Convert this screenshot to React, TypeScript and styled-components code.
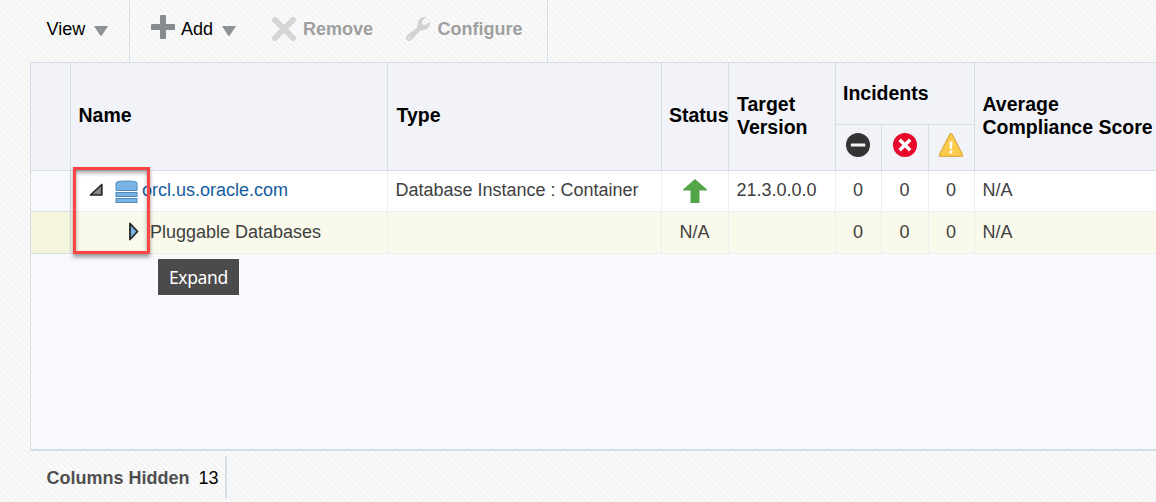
import React from "react";
import styled, { createGlobalStyle } from "styled-components";

const LINE = "#d6dfe6";
const SOFT = "#ededf0";

const GlobalStyle = createGlobalStyle`
  * { box-sizing: border-box; }
  body {
    margin: 0;
    overflow: hidden;
    font-family: "Liberation Sans", Arial, sans-serif;
    font-size: 18px;
    color: #000;
  }
`;

const Page = styled.div`
  position: relative;
  width: 1156px;
  height: 502px;
  overflow: hidden;
  background-color: #f9f9f9;
  background-image: linear-gradient(45deg, #f4f4f4 25%, #fafafa 25% 50%, #f4f4f4 50% 75%, #fafafa 75%);
  background-size: 6px 6px;
`;

const Toolbar = styled.div`
  display: flex;
  height: 62px;
`;

const ToolGroup = styled.div<{ $width: number; $pad: number }>`
  display: flex;
  align-items: flex-start;
  width: ${(p) => p.$width}px;
  height: 62px;
  padding-left: ${(p) => p.$pad}px;
  border-right: 1px solid ${LINE};
`;

const ToolButton = styled.div<{ $disabled?: boolean; $left?: number }>`
  display: flex;
  align-items: flex-start;
  margin-left: ${(p) => p.$left ?? 0}px;
  color: ${(p) => (p.$disabled ? "#9f9f9f" : "#000")};
  font-weight: ${(p) => (p.$disabled ? 700 : 400)};
  white-space: nowrap;
`;

const ToolLabel = styled.span<{ $left?: number }>`
  line-height: 20px;
  margin-top: 19px;
  margin-left: ${(p) => p.$left ?? 0}px;
`;

const ToolIcon = styled.svg<{ $top: number; $left?: number }>`
  display: block;
  flex: none;
  margin-top: ${(p) => p.$top}px;
  margin-left: ${(p) => p.$left ?? 0}px;
`;

const Panel = styled.div`
  height: 389px;
  margin-left: 30px;
  border: 1px solid ${LINE};
  border-right: 0;
  border-bottom-width: 2px;
  background: #f8f9fd;
`;

const GridRow = styled.div<{ $height: number; $bg: string; $line: string }>`
  display: grid;
  grid-template-columns: 40px 317px 274px 67px 107px 46px 47px 46px 1fr;
  height: ${(p) => p.$height}px;
  background: ${(p) => p.$bg};
  border-bottom: 1px solid ${(p) => p.$line};
`;

const HeadCell = styled.div<{ $last?: boolean; $pad?: number }>`
  display: flex;
  align-items: center;
  padding: 0 0 2px ${(p) => p.$pad ?? 7.5}px;
  border-right: ${(p) => (p.$last ? "0" : `1px solid ${LINE}`)};
  font-size: 19.5px;
  font-weight: 700;
  line-height: 23px;
  white-space: nowrap;
`;

const IncidentHead = styled.div`
  grid-column: span 3;
  display: grid;
  grid-template-rows: 62px 45px;
  grid-template-columns: 46px 47px 46px;
  border-right: 1px solid ${LINE};
`;

const IncidentTitle = styled.div`
  grid-column: span 3;
  display: flex;
  align-items: center;
  padding-left: 7px;
  border-bottom: 1px solid ${LINE};
  font-size: 19.5px;
  font-weight: 700;
`;

const IncidentIcon = styled.div<{ $last?: boolean }>`
  padding: 8px 0 0 10px;
  border-right: ${(p) => (p.$last ? "0" : `1px solid ${LINE}`)};
  svg { display: block; }
`;

const Gutter = styled.div<{ $bg: string }>`
  height: calc(100% + 1px);
  background: ${(p) => p.$bg};
  border-right: 1px solid ${LINE};
  border-bottom: 1px solid ${LINE};
`;

const Cell = styled.div<{ $center?: boolean; $last?: boolean; $low?: boolean }>`
  display: flex;
  align-items: flex-start;
  justify-content: ${(p) => (p.$center ? "center" : "flex-start")};
  padding: ${(p) => (p.$low ? 10 : 9)}px ${(p) => (p.$center ? 1 : 0)}px 0 ${(p) => (p.$center ? 0 : 7.4)}px;
  border-right: ${(p) => (p.$last ? "0" : `1px solid ${SOFT}`)};
  color: #404040;
  line-height: 20px;
  white-space: nowrap;
`;

const NameCell = styled(Cell)<{ $indent: number }>`
  padding-left: ${(p) => p.$indent}px;
`;

const TreeIcon = styled.svg<{ $top: number; $right: number }>`
  display: block;
  flex: none;
  margin: ${(p) => p.$top}px ${(p) => p.$right}px 0 0;
`;

const TargetLink = styled.a`
  color: #145c9e;
  text-decoration: none;
`;

const Footer = styled.div`
  display: flex;
  align-items: center;
  width: 227px;
  height: 42px;
  margin-top: 5px;
  padding: 3px 0 0 46.5px;
  border-right: 2px solid ${LINE};
  white-space: nowrap;
`;

const FooterLabel = styled.span`
  margin-right: 9px;
  color: #4f4f4f;
  font-weight: 700;
`;

const Highlight = styled.div`
  position: absolute;
  left: 73px;
  top: 167px;
  width: 77px;
  height: 87px;
  border: 3px solid #fc4444;
  box-shadow: 0 3px 4px rgba(0, 0, 0, 0.4), inset 0 3px 4px rgba(0, 0, 0, 0.35);
`;

const Tooltip = styled.div`
  position: absolute;
  left: 157px;
  top: 258px;
  width: 83px;
  height: 38px;
  border: 1px solid #fff;
  background: #4b4b4b;
  color: #fff;
  font-family: "Noto Sans", "Open Sans", sans-serif;
  font-size: 17.5px;
  letter-spacing: -0.4px;
  line-height: 37px;
  padding-left: 11px;
`;

const Caret = ({ left }: { left: number }) => (
  <ToolIcon $top={26} $left={left} width="14" height="10" viewBox="0 0 14 10">
    <path d="M0 0H14L8 9.200Q7 10.200 6 9.200Z" fill="#8c9295" />
  </ToolIcon>
);

const PlusIcon = () => (
  <ToolIcon $top={15} width="24" height="24" viewBox="0 0 24 24">
    <path d="M10 0h4q1 0 1 1v8h8q1 0 1 1v4q0 1-1 1h-8v8q0 1-1 1h-4q-1 0-1-1v-8H1q-1 0-1-1v-4q0-1 1-1h8V1q0-1 1-1Z" fill="#858b8e" />
  </ToolIcon>
);

const CrossIcon = () => (
  <ToolIcon $top={17} width="24" height="24" viewBox="0 0 24 24">
    <path d="M3 3 21 21M21 3 3 21" stroke="#d4d5d6" strokeWidth="6" strokeLinecap="round" />
  </ToolIcon>
);

const WrenchIcon = () => (
  <ToolIcon $top={17} width="24" height="24" viewBox="0 0 24 24">
    <path d="M20.500 0Q16 3 16 5T17.500 8Q20 8.500 24 4.500V8Q22 12.500 18 13Q15.500 12.500 14 14L6 22.500Q3.500 25 1 23T1.500 18L11 10.500Q12 9 11.500 6Q12.500 1.500 17 0Z" fill="#d0d2d3" />
    <circle cx="3" cy="21" r="1.200" fill="#e4e5e6" />
  </ToolIcon>
);

const BlockedIcon = () => (
  <svg width="25" height="25" viewBox="0 0 25 25">
    <circle cx="12" cy="12" r="12" fill="#343434" />
    <rect x="4.800" y="10.500" width="14.500" height="3" rx=".5" fill="#f4f4f4" />
  </svg>
);

const CriticalIcon = () => (
  <svg width="25" height="25" viewBox="0 0 25 25">
    <circle cx="13" cy="12" r="12" fill="#e6092b" />
    <path d="m7.600 6.800 10.600 10.400M18.200 6.800 7.600 17.200" stroke="#fff" strokeWidth="3.500" />
  </svg>
);

const WarningIcon = () => (
  <svg width="25" height="25" viewBox="0 0 25 25">
    <path d="M11.200 .7 .7 21V23.400H23.300V21L12.800 .7Z" fill="#fbcb4b" stroke="#dcae45" strokeWidth="1.300" strokeLinejoin="round" />
    <path d="M10.500 8.500h3l-.5 7.500h-2ZM10.600 17.500h2.800v3h-2.800Z" fill="#fff" />
  </svg>
);

const ArrowIcon = styled.svg`
  display: block;
  flex: none;
`;

const UpArrow = () => (
  <ArrowIcon width="24" height="24" viewBox="0 0 24 24">
    <path d="M12 0 24 10.500V11.500H16.500V24H7.500V11.500H0V10.500Z" fill="#54a44a" />
  </ArrowIcon>
);

const CollapseIcon = () => (
  <TreeIcon $top={3} $right={11} width="15" height="14" viewBox="0 0 15 14">
    <path d="M12.800 1.500V12H1.500Z" fill="#85898d" stroke="#252525" strokeWidth="1.700" strokeLinejoin="round" />
  </TreeIcon>
);

const ExpandIcon = () => (
  <TreeIcon $top={-1} $right={11} width="11" height="20" viewBox="0 0 11 20">
    <path d="M2 2.500 9.500 10.500 2 18.500Z" fill="#78b4e6" stroke="#252525" strokeWidth="1.800" strokeLinejoin="round" />
  </TreeIcon>
);

const DatabaseIcon = () => (
  <TreeIcon $top={0} $right={4.5} width="23" height="24" viewBox="0 0 23 24">
    <path d="M1 10.500V3Q1 1 11.500 1T22 3V10.500Z" fill="#7ab4e4" stroke="#4c8abb" />
    <rect x="1" y="12.500" width="21" height="4" fill="#7ab4e4" stroke="#4c8abb" />
    <rect x="1" y="18.500" width="21" height="4" fill="#7ab4e4" stroke="#4c8abb" />
  </TreeIcon>
);

const StatusCell = styled(Cell)`
  padding: 8px 0 0;
`;

export default function App() {
  return (
    <>
      <GlobalStyle />
      <Page>
        <Toolbar>
          <ToolGroup $width={130} $pad={46.5}>
            <ToolButton>
              <ToolLabel>View</ToolLabel>
              <Caret left={8.500} />
            </ToolButton>
          </ToolGroup>
          <ToolGroup $width={418} $pad={21}>
            <ToolButton>
              <PlusIcon />
              <ToolLabel $left={6}>Add</ToolLabel>
              <Caret left={9} />
            </ToolButton>
            <ToolButton $disabled $left={36}>
              <CrossIcon />
              <ToolLabel $left={7}>Remove</ToolLabel>
            </ToolButton>
            <ToolButton $disabled $left={33}>
              <WrenchIcon />
              <ToolLabel $left={7.5}>Configure</ToolLabel>
            </ToolButton>
          </ToolGroup>
        </Toolbar>
        <Panel>
          <GridRow $height={108} $bg="#f2f3f8" $line={LINE}>
            <HeadCell />
            <HeadCell>Name</HeadCell>
            <HeadCell $pad={8.5}>Type</HeadCell>
            <HeadCell $pad={7}>Status</HeadCell>
            <HeadCell $pad={8}>Target<br />Version</HeadCell>
            <IncidentHead>
              <IncidentTitle>Incidents</IncidentTitle>
              <IncidentIcon><BlockedIcon /></IncidentIcon>
              <IncidentIcon><CriticalIcon /></IncidentIcon>
              <IncidentIcon $last><WarningIcon /></IncidentIcon>
            </IncidentHead>
            <HeadCell $last>Average<br />Compliance Score</HeadCell>
          </GridRow>
          <GridRow $height={41} $bg="#ffffff" $line={SOFT}>
            <Gutter $bg="#f8f9fd" />
            <NameCell $indent={17.5}>
              <CollapseIcon />
              <DatabaseIcon />
              <TargetLink>orcl.us.oracle.com</TargetLink>
            </NameCell>
            <Cell>Database Instance : Container</Cell>
            <StatusCell $center><UpArrow /></StatusCell>
            <Cell>21.3.0.0.0</Cell>
            <Cell $center>0</Cell>
            <Cell $center>0</Cell>
            <Cell $center>0</Cell>
            <Cell $last>N/A</Cell>
          </GridRow>
          <GridRow $height={42} $bg="#f9faeb" $line={SOFT}>
            <Gutter $bg="#f5f5de" />
            <NameCell $indent={57} $low>
              <ExpandIcon />
              <span>Pluggable Databases</span>
            </NameCell>
            <Cell />
            <Cell $center $low>N/A</Cell>
            <Cell />
            <Cell $center $low>0</Cell>
            <Cell $center $low>0</Cell>
            <Cell $center $low>0</Cell>
            <Cell $last $low>N/A</Cell>
          </GridRow>
        </Panel>
        <Footer>
          <FooterLabel>Columns Hidden</FooterLabel>
          <span>13</span>
        </Footer>
        <Highlight />
        <Tooltip>Expand</Tooltip>
      </Page>
    </>
  );
}
